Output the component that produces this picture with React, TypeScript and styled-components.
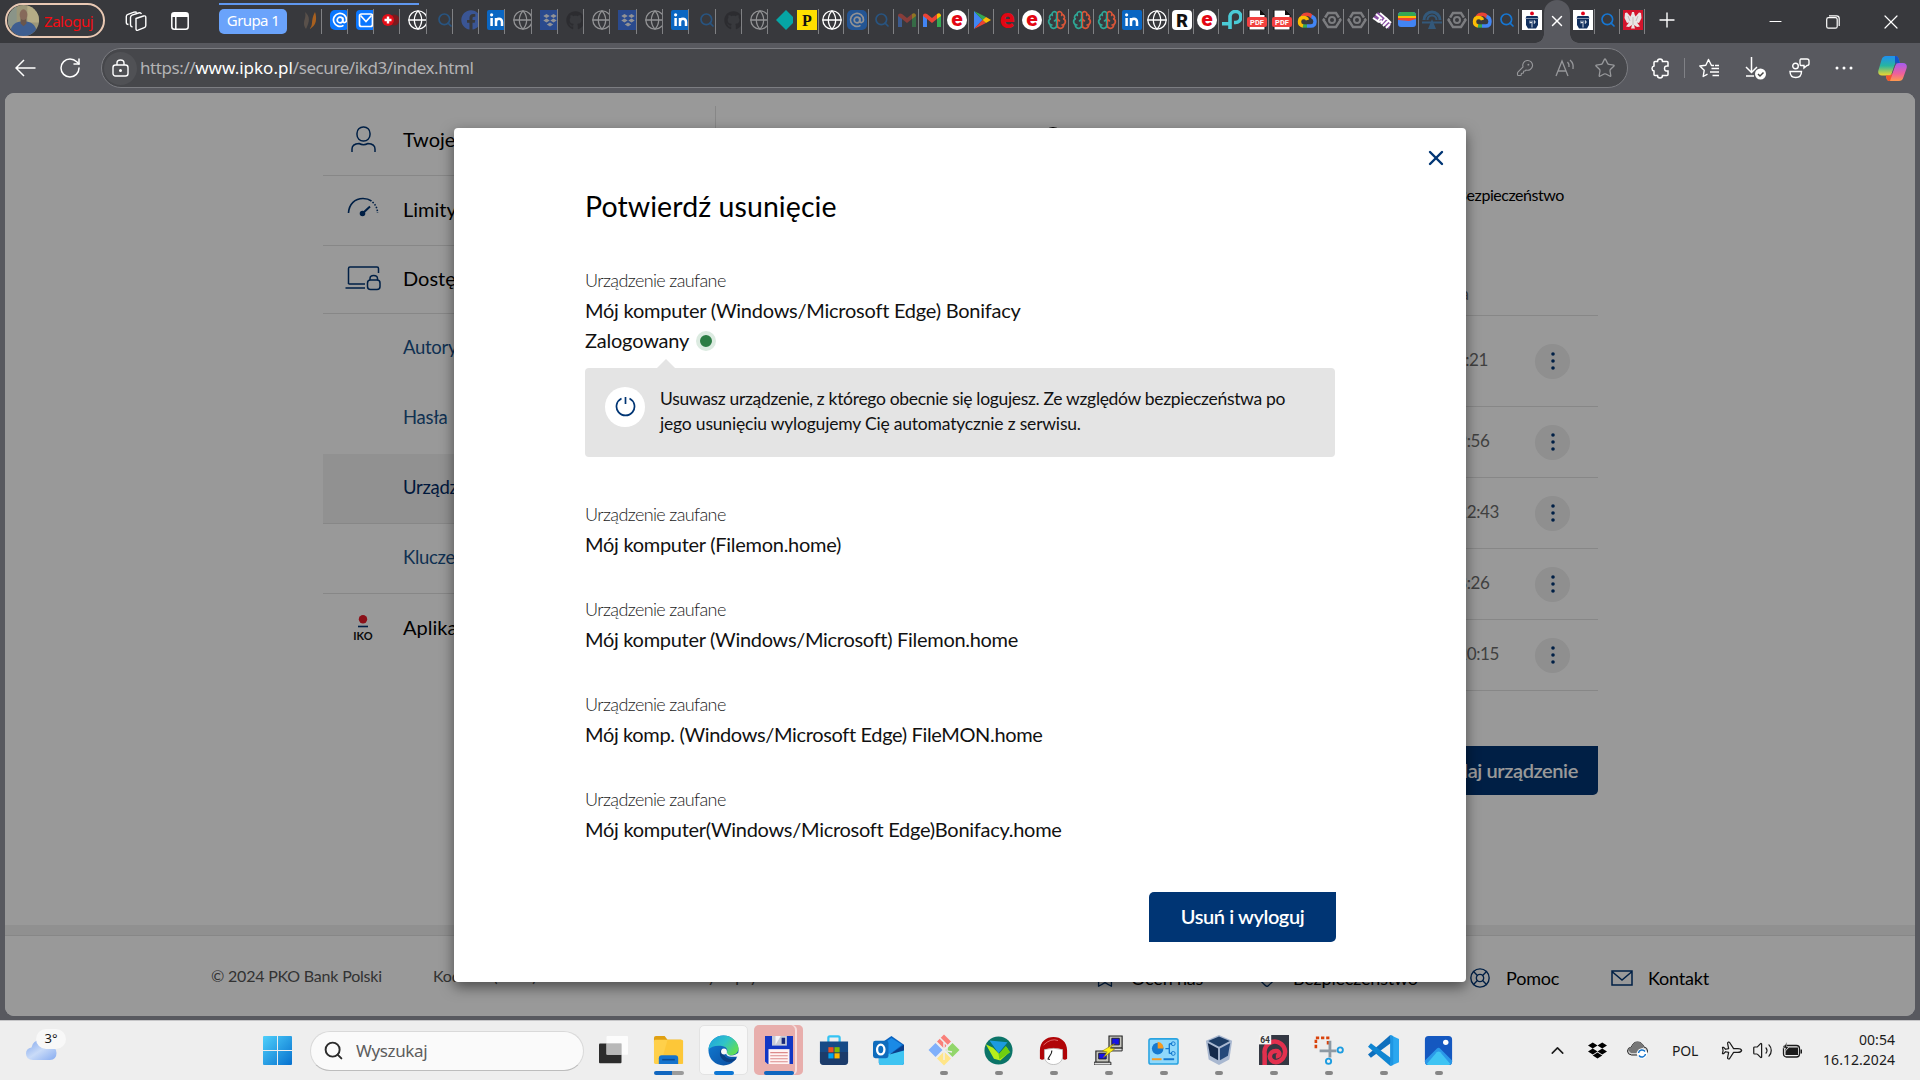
import React from 'react';
import styled, { createGlobalStyle, css } from 'styled-components';
import { Globe, Search, Star, KeyRound, Brain, X, Plus, Minus, ArrowLeft, RotateCw, Mail, Bookmark, Heart, LifeBuoy, Plane, Volume2, ChevronUp, CircleUser } from 'lucide-react';
import { FaDropbox, FaGithub, FaFacebook } from 'react-icons/fa';

const BANK = "Lato, 'Noto Sans', sans-serif";
const SYS = "'Noto Sans', 'Open Sans', sans-serif";
const NAVY = '#003574';

const Global = createGlobalStyle`
  *, *::before, *::after { box-sizing: border-box; }
  html, body { margin: 0; padding: 0; }
  body { overflow: hidden; background: #58595f; }
  svg { display: block; flex: none; }
`;

const Screen = styled.div`
  width: 1920px;
  height: 1080px;
  display: flex;
  flex-direction: column;
  background: #58595f;
  font-family: ${SYS};
  overflow: hidden;
`;

/* ---------- tab strip ---------- */
const TabStrip = styled.header`
  position: relative;
  display: flex;
  align-items: flex-start;
  height: 43px;
  background: #38393d;
  color: #fff;
`;
const Profile = styled.div`
  display: flex;
  align-items: center;
  gap: 5px;
  width: 100px;
  height: 35px;
  margin: 3px 0 0 5px;
  padding-left: 1px;
  border: 2px solid #e9c9b4;
  border-radius: 18px;
  color: #f40b12;
  font-size: 15px;
  letter-spacing: -0.45px;
`;
const StripCell = styled.div<{ $w: number; $h?: number }>`
  flex: none;
  display: flex;
  align-items: center;
  justify-content: center;
  width: ${p => p.$w}px;
  height: ${p => p.$h ?? 41}px;
`;
const GroupChip = styled.div`
  flex: none;
  width: 68px;
  height: 25px;
  margin: 9px 8.3px 0 25px;
  border-radius: 5px;
  background: #6aa3fb;
  font-size: 15px;
  line-height: 23px;
  text-align: center;
  letter-spacing: -0.6px;
`;
const GroupLine = styled.div`
  position: absolute;
  left: 219px;
  top: 3px;
  width: 200px;
  height: 2px;
  background: #5f97ef;
`;
const Tab = styled.div<{ $grouped?: boolean; $dim?: boolean; $last?: boolean }>`
  flex: none;
  display: flex;
  align-items: center;
  width: ${p => (p.$grouped ? 26.28 : 25)}px;
  height: 25px;
  margin-top: 9px;
  padding: 0 0 3px ${p => (p.$grouped ? 8 : 3)}px;
  overflow: hidden;
  border-right: 1px solid ${p => (p.$last ? 'transparent' : '#808184')};
  & > svg { opacity: ${p => (p.$dim ? 0.45 : 1)}; }
`;
const ActiveTab = styled.div`
  position: relative;
  flex: none;
  display: flex;
  align-items: center;
  justify-content: center;
  width: 26px;
  height: 43px;
  padding-bottom: 2px;
  border-radius: 13px 13px 0 0;
  background: #58595f;
  &::before, &::after {
    content: '';
    position: absolute;
    bottom: 0;
    width: 9px;
    height: 9px;
  }
  &::before { left: -9px; background: radial-gradient(circle at 0 0, transparent 8.5px, #58595f 9px); }
  &::after { right: -9px; background: radial-gradient(circle at 100% 0, transparent 8.5px, #58595f 9px); }
`;
const Spacer = styled.div`flex: 1;`;

/* ---------- toolbar ---------- */
const Toolbar = styled.nav`
  display: flex;
  align-items: center;
  height: 50px;
  padding-left: 5px;
  background: #58595f;
  color: #fff;
`;
const Address = styled.div`
  display: flex;
  align-items: center;
  width: 1527px;
  height: 40px;
  margin: 0 9px 0 7px;
  border: 1px solid #7c7d82;
  border-radius: 20px;
  background: #46474b;
`;
const LockBadge = styled.div`
  display: grid;
  place-items: center;
  width: 33px;
  height: 33px;
  margin: 0 3px 0 2px;
  border-radius: 50%;
  background: #505155;
`;
const Url = styled.div`
  flex: 1;
  padding-bottom: 2px;
  color: #b3b3b5;
  font-size: 17px;
  letter-spacing: -0.42px;
  b { font-weight: 400; color: #fff; letter-spacing: 0; }
`;
const ToolCell = styled.div<{ $w: number; $muted?: boolean }>`
  flex: none;
  display: flex;
  align-items: center;
  justify-content: center;
  width: ${p => p.$w}px;
  height: 40px;
  color: ${p => (p.$muted ? '#97989b' : '#fff')};
`;
const ToolDivider = styled.div`width: 1px; height: 20px; margin: 0 0 0 1px; background: #808186;`;

/* ---------- page ---------- */
const Page = styled.main`
  position: relative;
  flex: none;
  display: flex;
  flex-direction: column;
  width: 1910px;
  height: 923px;
  margin: 0 5px;
  border-radius: 9px;
  overflow: hidden;
  background: #fff;
  font-family: ${BANK};
`;
const PageBody = styled.div`
  display: flex;
  height: 832px;
  padding: 13px 317px 0 318px;
`;
const Sidebar = styled.aside`
  width: 393px;
  border-right: 1px solid #e2e2e2;
`;
const SideItem = styled.div<{ $h?: number; $line?: boolean }>`
  display: flex;
  align-items: center;
  height: ${p => p.$h ?? 70}px;
  padding-bottom: 3px;
  border-bottom: 1px solid ${p => (p.$line === false ? 'transparent' : '#e2e2e2')};
  font-size: 20px;
  color: #000;
  white-space: nowrap;
`;
const SideIcon = styled.div`
  width: 80px;
  display: flex;
  justify-content: center;
  color: ${NAVY};
`;
const SubItem = styled.div<{ $active?: boolean; $line?: boolean }>`
  display: flex;
  align-items: center;
  height: 70px;
  padding: 0 0 4px 80px;
  font-size: 18.5px;
  letter-spacing: -0.3px;
  color: ${p => (p.$active ? '#002a66' : '#1a5289')};
  background: ${p => (p.$active ? '#f2f2f2' : 'transparent')};
  border-bottom: 1px solid ${p => (p.$line ? '#e2e2e2' : 'transparent')};
`;
const MainColumn = styled.section`
  flex: 1;
  display: flex;
  flex-direction: column;
`;
const Views = styled.div`
  display: flex;
  justify-content: space-between;
  align-items: flex-start;
  height: 148px;
  padding: 20px 34px 0 326px;
  font-size: 16px;
  letter-spacing: -0.45px;
  span { margin-top: 59px; }
`;
const TableHead = styled.div`
  display: flex;
  justify-content: flex-end;
  align-items: center;
  height: 62px;
  padding: 18px 129px 0 0;
  border-bottom: 1px solid #e2e2e2;
  font-size: 17px;
  color: #707070;
`;
const DeviceRow = styled.div<{ $h: number }>`
  display: flex;
  justify-content: flex-end;
  align-items: center;
  height: ${p => p.$h}px;
  border-bottom: 1px solid #e2e2e2;
`;
const Stamp = styled.div<{ $gap: number }>`
  margin: 0 ${p => p.$gap}px 3px 0;
  font-size: 17px;
  letter-spacing: -0.4px;
  color: #6c6c6c;
`;
const MoreButton = styled.button`
  width: 35px;
  height: 35px;
  margin: 0 28px 0 0;
  padding: 0;
  display: grid;
  place-items: center;
  border: 0;
  border-radius: 50%;
  background: #eeeeee;
`;
const Action = styled.button<{ $w: number; $h: number }>`
  align-self: flex-end;
  width: ${p => p.$w}px;
  height: ${p => p.$h}px;
  padding: 0 0 2px;
  border: 0;
  border-radius: 5px 0 5px 0;
  background: ${NAVY};
  color: #fff;
  font: 600 20px ${BANK};
  letter-spacing: -0.4px;
`;
const DialogActions = styled.div`
  display: flex;
  justify-content: flex-end;
  margin-top: auto;
  padding-bottom: 40px;
`;
const AddWrap = styled.div`
  display: flex;
  justify-content: flex-end;
  padding-top: 55px;
`;
const Band = styled.div`
  height: 11px;
  background: #f1f1f1;
  border-bottom: 1px solid #e2e2e2;
`;
const Footer = styled.footer`
  flex: 1;
  display: flex;
  align-items: center;
  padding: 0 0 0 206px;
  font-size: 16px;
  letter-spacing: -0.2px;
  color: #555;
`;
const FootNote = styled.div<{ $w: number }>`
  width: ${p => p.$w}px;
  padding-bottom: 2px;
`;
const FootLink = styled.div<{ $w: number }>`
  display: flex;
  align-items: center;
  gap: 15px;
  width: ${p => p.$w}px;
  padding-top: 4px;
  font-size: 18px;
  color: #000;
  svg { color: ${NAVY}; }
`;

/* ---------- dialog ---------- */
const Overlay = styled.div`
  position: absolute;
  inset: 0;
  display: flex;
  align-items: center;
  justify-content: center;
  background: rgba(0, 0, 0, 0.4);
`;
const Dialog = styled.div`
  position: relative;
  display: flex;
  flex-direction: column;
  width: 1012px;
  height: 854px;
  padding: 60px 130px 0 131px;
  border-radius: 4px;
  background: #fff;
  box-shadow: 0 5px 14px rgba(0, 0, 0, 0.5);
  color: #111;
`;
const Close = styled.button`
  position: absolute;
  right: 18px;
  top: 18px;
  padding: 0;
  border: 0;
  background: none;
  color: ${NAVY};
`;
const Title = styled.h1`
  margin: 0 0 41px;
  font-size: 28.5px;
  line-height: 36px;
  font-weight: 400;
  letter-spacing: 0.08px;
  color: #000;
`;
const Device = styled.div`
  & + & { margin-top: 34px; }
`;
const Label = styled.div`
  height: 31px;
  font-size: 18px;
  font-weight: 300;
  line-height: 30px;
  letter-spacing: -0.62px;
  color: #222;
`;
const Name = styled.div<{ $ls?: number }>`
  display: flex;
  align-items: center;
  gap: 7px;
  height: 30px;
  font-size: 20px;
  line-height: 28px;
  white-space: nowrap;
  letter-spacing: ${p => p.$ls ?? -0.28}px;
  span { line-height: 28px; padding-bottom: 2px; }
`;
const Dot = styled.i`
  width: 20px;
  height: 20px;
  border: 4px solid #dcebe1;
  border-radius: 50%;
  background: #2c7d45;
`;
const Warning = styled.div`
  position: relative;
  display: flex;
  align-items: flex-start;
  gap: 15px;
  width: 750px;
  height: 89px;
  margin: 12px 0 42px;
  padding: 18px 20px 0;
  border-radius: 4px;
  background: #e4e4e4;
  font-size: 17.5px;
  line-height: 25px;
  &::before {
    content: '';
    position: absolute;
    left: 72px;
    top: -9px;
    border: 9px solid transparent;
    border-top: 0;
    border-bottom-color: #e4e4e4;
  }
`;
const PowerBadge = styled.div`
  flex: none;
  display: grid;
  place-items: center;
  width: 40px;
  height: 40px;
  margin-top: 1px;
  border-radius: 50%;
  background: #fff;
`;
const WarnLine = styled.div<{ $ls: number }>`
  white-space: nowrap;
  letter-spacing: ${p => p.$ls}px;
`;

/* ---------- taskbar ---------- */
const Taskbar = styled.div`
  flex: none;
  display: flex;
  align-items: center;
  height: 60px;
  margin-top: 4px;
  border-top: 1px solid #c6c6c8;
  background: #eeeeee;
  color: #1b1b1b;
`;
const Weather = styled.div`
  position: relative;
  width: 250px;
  height: 60px;
  padding: 19px 0 0 26px;
`;
const Temp = styled.div`
  position: absolute;
  left: 36px;
  top: 8px;
  width: 30px;
  height: 20px;
  border-radius: 10px;
  background: #f8f8f8;
  font-size: 13px;
  line-height: 19px;
  text-align: center;
`;
const SearchBox = styled.div`
  flex: none;
  display: flex;
  align-items: center;
  gap: 12px;
  width: 274px;
  height: 40px;
  margin: 0 2px 0 5px;
  padding-left: 12px;
  border: 1px solid #d9d9d9;
  border-bottom-color: #bdbdbd;
  border-radius: 20px;
  background: #fafafa;
  font-size: 17px;
  letter-spacing: -0.35px;
  color: #5d5d5d;
`;
const AppCell = styled.div`
  position: relative;
  flex: none;
  display: flex;
  align-items: center;
  justify-content: center;
  width: 55px;
  height: 60px;
  padding-bottom: 1px;
`;
const Tile = styled.div<{ $tone: 'none' | 'light' | 'red' }>`
  display: grid;
  place-items: center;
  width: 49px;
  height: 50px;
  border-radius: 5px;
  ${p => p.$tone === 'light' && css`background: #f8f8f8; border: 1px solid #e3e3e3;`}
  ${p => p.$tone === 'red' && css`background: #e8aeac; box-shadow: inset -6px 0 0 #e8aeac, inset -8px 0 0 #f6dedd;`}
`;
const Mark = styled.div<{ $w: number; $c: string }>`
  position: absolute;
  left: 50%;
  bottom: 6px;
  width: ${p => p.$w}px;
  height: 4px;
  transform: translateX(-50%);
  border-radius: 2px;
  background: ${p => p.$c};
`;
const TrayCell = styled.div<{ $w: number }>`
  flex: none;
  display: flex;
  align-items: center;
  justify-content: center;
  width: ${p => p.$w}px;
  padding-bottom: 1px;
  font-size: 14px;
  letter-spacing: -0.2px;
`;
const Clock = styled.div`
  width: 84px;
  margin: 0 24px 0 4px;
  padding: 0 1px 2px 0;
  text-align: right;
  font-size: 14px;
  line-height: 20px;
  letter-spacing: 0.04px;
`;

/* ---------- favicons ---------- */
const Svg = ({ s = 20, children, vb = '0 0 20 20', w }: { s?: number; w?: number; vb?: string; children: React.ReactNode }) => (
  <svg width={w ?? s} height={s} viewBox={vb} fill="none">{children}</svg>
);
const At = () => <Svg><rect width="20" height="20" rx="5" fill="#0a77ff" /><circle cx="10" cy="10" r="2.8" stroke="#fff" strokeWidth="1.7" /><path d="M12.8 7.400v3.600c0 2.400 3.700 2 3.700-1a6.500 6.500 0 1 0-3 5.400" stroke="#fff" strokeWidth="1.700" /></Svg>;
const MailBox = () => <Svg><rect width="20" height="20" rx="4" fill="#0a77ff" /><rect x="3.500" y="4" width="13" height="12.500" rx="2" stroke="#fff" strokeWidth="1.700" /><path d="m4.500 5.500 5.500 6 5.500-6" stroke="#fff" strokeWidth="1.700" /></Svg>;
const Flame = () => <Svg><path d="M3 19C-2 12 4 9 2 2c5 4 5 9 1 17Z" fill="#59504a" /><path d="M6 19c5-3 1-8 6-17 2 6 2 14-6 17Z" fill="#a8601f" /></Svg>;
const RedCross = () => <Svg><circle cx="12" cy="10" r="5.500" fill="#7b1a1e" /><circle cx="6" cy="10" r="6" fill="#e30d17" /><path d="M6 6.500v7M2.500 10h7" stroke="#fff" strokeWidth="2.400" /></Svg>;
const World = () => <Globe size={22} strokeWidth={1.4} color="#fff" style={{ marginLeft: -1 }} />;
const Find = () => <Search size={16} strokeWidth={2.500} color="#1676d2" style={{ marginLeft: 2 }} />;
const Fb = () => <FaFacebook size={20} color="#3d78ff" />;
const Ln = () => <Svg><rect width="20" height="20" rx="2" fill="#0a66c2" /><path d="M4.600 8v8M9 16V8m0 4c0-4.200 6-4.500 6 0v4" stroke="#fff" strokeWidth="2.500" /><circle cx="4.600" cy="4.800" r="1.600" fill="#fff" /></Svg>;
const Dbx = () => <Svg><rect width="20" height="20" fill="#1a60f0" /><path d="m6.500 4 3.200 2-3.200 2-3.200-2zm7 0 3.200 2-3.200 2-3.200-2zm-7 4.500 3.200 2-3.200 2-3.200-2zm7 0 3.200 2-3.200 2-3.200-2zM10 12.500l3.200 2-3.200 2-3.200-2z" fill="#fff" /></Svg>;
const Git = () => <FaGithub size={19} color="#1e1e22" />;
const Diamond = () => <Svg><path d="M10 0l10 10-10 10L0 10z" fill="#06a5a5" /></Svg>;
const Letter = ({ bg, fg, ch, r = 0, font = 'Roboto', size = 17, y = 16 }: { bg: string; fg: string; ch: string; r?: number; font?: string; size?: number; y?: number }) => (
  <Svg><rect width="20" height="20" rx={r} fill={bg} /><text x="10" y={y} textAnchor="middle" fontFamily={font} fontWeight="900" fontSize={size} fill={fg}>{ch}</text></Svg>
);
const PBadge = () => <Letter bg="#ffdf00" fg="#111" ch="P" font="Liberation Serif" size={16} y={15.5} />;
const EWhite = () => <Letter bg="#fff" fg="#e30613" ch="e" r={10} size={21} />;
const ERed = () => <Letter bg="transparent" fg="#e30613" ch="e" size={27} y={17.5} />;
const RBadge = () => <Letter bg="#fff" fg="#111" ch="R" r={4} size={18} y={16.5} />;
const Gmail = () => <Svg><path d="M1 17V5l4 3v9z" fill="#4285f4" /><path d="M15 17V8l4-3v12z" fill="#34a853" /><path d="M1 6c0-3 2.500-3 4-2l5 4 5-4-.1 5L10 13 5 9 1 6z" fill="#ea4335" /><path d="M15 9V4c2-1.500 4-.5 4 2z" fill="#fbbc04" /></Svg>;
const Play = () => <Svg><path d="M2 1v18l8.500-9z" fill="#4285f4" /><path d="M2 1l12 6-3.500 3z" fill="#34a853" /><path d="M2 19l12-6-3.500-3z" fill="#ea4335" /><path d="M14 7l5 3-5 3-3.500-3z" fill="#fbbc04" /></Svg>;
const Mind = () => (
  <svg width="20" height="20" viewBox="0 0 20 20" fill="none">
    <defs><linearGradient id="mind" gradientUnits="userSpaceOnUse" x1="0" x2="24" y1="0" y2="0"><stop offset=".5" stopColor="#2ea795" /><stop offset=".5" stopColor="#d95537" /></linearGradient></defs>
    <Brain size={20} strokeWidth={2} stroke="url(#mind)" />
    <path d="M9.300 2v16" stroke="#2ea795" /><path d="M10.700 2v16" stroke="#d95537" />
  </svg>
);
const Tp = () => <Svg><path d="M8 19V6a5.500 5.500 0 1 1 5.500 6.500H12" stroke="#4acbd6" strokeWidth="3.600" /><path d="M0 12h7v3.500H0z" fill="#4acbd6" /></Svg>;
const Pdf = () => <Svg><path d="M2 0h11l5 5v15H2z" fill="#fff" stroke="#111" /><path d="M13 0l5 5h-5z" fill="#111" /><rect y="7" width="20" height="10" rx="2" fill="#f2413f" /><text x="10" y="14.800" fontSize="7.500" fontWeight="700" fill="#fff" fontFamily="Roboto" textAnchor="middle">PDF</text></Svg>;
const Cloud = () => <Svg><path d="M5 7a6 6 0 0 1 10 0" stroke="#ea4335" strokeWidth="3.400" /><path d="M14.500 6.500c5 1.500 4.500 9.500-.5 9.500h-4" stroke="#4285f4" strokeWidth="3.400" /><path d="M10 16H5.500" stroke="#34a853" strokeWidth="3.400" /><path d="M6 16c-5-1-4.500-8.500.5-8.500 2 0 3.500 1 4 2.500" stroke="#fbbc04" strokeWidth="3.400" /></Svg>;
const Hexa = () => <Svg><path d="M6 3h8l4.500 7-4.500 7H6l-4.500-7z" stroke="#d0d0d2" strokeWidth="2.400" /><path d="M1 7l5 3M19 7l-5 3" stroke="#38393d" strokeWidth="1.200" /><circle cx="10" cy="10" r="3" stroke="#d0d0d2" strokeWidth="2" /></Svg>;
const Stripes = () => <Svg><path d="M1 8l5-6 13 11-2 6z" fill="#8a4fa5" /><path d="M1 8l6 4 3-1M4 4l6 5M8 3l6 5-5 6M14 8l5 5M11 16l5-5M14 18l4-4M5 12l4-5" stroke="#fff" strokeWidth="1.900" /></Svg>;
const Wallet = () => <Svg><rect x="1" y="2" width="18" height="15" rx="3" fill="#4285f4" /><path d="M1 10V6h18v3l-7 2z" fill="#ea4335" /><path d="M1 6h18v2H1z" fill="#fbbc04" /><path d="M1 6c0-5 3-4 9-4s9-1 9 4z" fill="#34a853" /></Svg>;
const Tunnel = () => <Svg><path d="M2 10a8 8 0 0 1 16 0" stroke="#2e7fc4" strokeWidth="3" /><path d="M5.500 10a4.500 4.500 0 0 1 9 0M0 12.500h20" stroke="#2e7fc4" strokeWidth="2" /><path d="M6 19l4-10 4 10z" fill="#2e7fc4" /></Svg>;
const Pko = () => <Svg><rect width="20" height="20" fill="#fff" /><circle cx="10" cy="3.400" r="1.900" fill="#e2001a" /><path d="M4.500 6h11l1 2.500h-13zM4 9h12v6l-2 3.500H6l-2-3.500z" fill="#12305f" /><path d="M8 10.500v3M10 10.500v7M8 12.500h2M12.300 10.500v3q2-1.500 0-3" stroke="#fff" strokeWidth=".8" /></Svg>;
const Eagle = () => <Svg><rect width="20" height="20" fill="#d4142c" /><path d="M9 2h2l.6 2.500 1 2L16 2.500l2 .5.500 5-2.500 5-2-.5 3 4-3 .500L11 15l1 3.500H8L9 15l-3 2-3-.500 3-4-2 .500-2.500-5L2 3l2-.5 3.400 4 1-2z" fill="#e9e4e4" /><path d="M5 6l2 5M15 6l-2 5M10 7v8" stroke="#b7a9a9" strokeWidth=".7" /></Svg>;

type Fav = [React.FC, boolean?];
const groupTabs: Fav[] = [[Flame], [At], [MailBox], [RedCross], [World], [Find, true], [Fb, true], [Ln], [World, true], [Dbx, true], [Git, true], [World, true], [Dbx, true], [World, true], [Ln], [Find, true], [Git, true], [World, true], [Diamond]];
const looseTabs: Fav[] = [[PBadge], [World], [At, true], [Find, true], [Gmail, true], [Gmail], [EWhite], [Play], [ERed], [EWhite], [Mind], [Mind], [Mind], [Ln], [World], [RBadge], [EWhite], [Tp], [Pdf], [Pdf], [Cloud], [Hexa, true], [Hexa, true], [Stripes], [Wallet], [Tunnel, true], [Hexa, true], [Cloud], [Find]];

/* ---------- taskbar icons ---------- */
const V = '0 0 32 32';
const TaskView = () => <Svg s={30} vb={V}><rect x="0" y="9" width="24" height="21" rx="1" fill="#2c2c2c" /><rect x="8" y="1" width="23" height="20" rx="1" fill="#fff" opacity=".82" /><path d="M8 9h16v12H8z" fill="#b8b8b8" /></Svg>;
const Explorer = () => <Svg s={31} vb={V}><path d="M1 6V3q0-2 2-2h9l3 4h14v4H1z" fill="#e0a012" /><rect x="1" y="5" width="30" height="25" rx="1.500" fill="#ffd04a" /><path d="M15 5h14q2 0 2 2v23H8z" fill="#fbc22d" opacity=".6" /><path d="M6 30v-6q0-3 3-3h14q3 0 3 3v6z" fill="#1573cc" /><path d="M9.500 25.500h13" stroke="#0b4c93" strokeWidth="1.600" /></Svg>;
const Edge = () => (
  <Svg s={31} vb={V}>
    <defs>
      <linearGradient id="eg" x1="0" y1="0" x2="1" y2=".6"><stop stopColor="#1d9de0" /><stop offset=".55" stopColor="#2fc3c9" /><stop offset="1" stopColor="#5fdd58" /></linearGradient>
      <linearGradient id="eb" x1="0" y1="0" x2="1" y2="1"><stop stopColor="#1180d8" /><stop offset="1" stopColor="#0b4a9c" /></linearGradient>
    </defs>
    <circle cx="16" cy="16" r="15.500" fill="url(#eb)" />
    <path d="M.5 15C1 6 8 .5 16 .5S31.500 7 31.500 13.500c0 5-4 7.500-8 7.500-4 0-5-1.500-4-3.500 1-1.500.5-5-4-6C9 10 3 12 .5 15Z" fill="url(#eg)" />
    <path d="M14 14c-4 5-1 14 8 14 3 0 6-1.500 7.500-4-4 1.500-13 1.500-14-7z" fill="#0a3f83" />
    <path d="M19 17.500c-1 3 1 5 5 5h7.500c1-1 .8-3.500.5-4.500l-4 2.500c-4 1.500-8 0-8-1.500z" fill="#f8f8f8" />
    <circle cx="16.500" cy="17" r="3" fill="#f8f8f8" />
  </Svg>
);
const Floppy = () => <Svg s={28} vb={V}><path d="M0 0h32v32H3l-3-3z" fill="#1237c4" /><path d="M8 0h17v11H8z" fill="#c9ccd6" /><path d="M12 0l6 0-6 10z" fill="#f4f4f8" /><path d="M19 2h4v7h-4z" fill="#1a2a7a" /><path d="M4 15h24v17H4z" fill="#fff3f2" /><path d="M6 19h20M6 22.500h20M6 26h20M6 29.500h20" stroke="#dc8a8a" strokeWidth="1.200" /></Svg>;
const Store = () => <Svg s={30} vb={V}><path d="M10 8V3q0-1.500 1.500-1.500h9q1.500 0 1.500 1.500v5" stroke="#35c3f3" strokeWidth="2.400" /><path d="M1 7h30v21q0 4-4 4H5q-4 0-4-4z" fill="#164a86" /><path d="M1 18h30v10q0 4-4 4H5q-4 0-4-4z" fill="#1f3660" opacity=".7" /><path d="M10 13h5.500v5.500H10z" fill="#f25022" /><path d="M16.500 13H22v5.500h-5.500z" fill="#7fba00" /><path d="M10 19.500h5.500V25H10z" fill="#00a4ef" /><path d="M16.500 19.500H22V25h-5.500z" fill="#ffb900" /></Svg>;
const Outlook = () => <Svg s={31} vb={V}><path d="M6 10 19 1l13 9v18q0 3-3 3H9q-3 0-3-3z" fill="#0a63c0" /><path d="M10 9l9-6 11 7-14 11z" fill="#1a8ae6" /><path d="M6 21l12-2 14-7v16q0 3-3 3H9q-3 0-3-3z" fill="#3fc4f2" /><path d="M17 20 32 10v6z" fill="#0b3f8c" /><rect y="6" width="16" height="18" rx="2.500" fill="#0f6cbd" /><ellipse cx="8" cy="15" rx="3.800" ry="5" stroke="#fff" strokeWidth="2.400" /></Svg>;
const GitTool = () => <Svg s={32} vb={V}><path d="M16 .5l7 7-7 7-7-7z" fill="#f98079" /><path d="M24.500 9l7 7-7 7-7-7z" fill="#92d66a" /><path d="M7.500 9l7 7-7 7-7-7z" fill="#80b0fb" /><path d="M16 17.500l7 7-7 7-7-7z" fill="#ffe588" /><path d="M12 4l7 7v6l5 1M16 8v18" stroke="#eee" strokeWidth="1.500" /></Svg>;
const GreenArrow = () => <Svg s={29} vb={V}><circle cx="16" cy="16" r="15.500" fill="#0b7468" /><path d="M6 5l20 2-10 12z" fill="#1c9be0" /><path d="M2 9l8 4 7 7 8-8 3 6-10 9-7-2z" fill="#b6ee1c" /><path d="M16 20l8-9 5 7-12 8z" fill="#6fcf10" /></Svg>;
const Masked = () => <Svg s={29} vb={V}><path d="M1 16C1 6 8 1 16 1s15 5 15 15v9q-2.500 2.500-5 0V15H6v10q-2.500 2.500-5 0z" fill="#b00508" /><path d="M6 15q10-3 20 0v8c0 5-5 8.500-10 8.500S6 28 6 23z" fill="#fff" stroke="#999" strokeWidth=".6" /><path d="M14 16c1 4-4 7-4 9.500l2 .5" stroke="#222" strokeWidth="1.200" /><path d="M5 10q8-8 16-5" stroke="#e27070" /></Svg>;
const Putty = () => <Svg s={30} vb={V}><path d="M16 1h14v13H16zM2 17h14v12H2z" fill="#c4c4bd" stroke="#222" strokeWidth="1.200" /><path d="M19 3.500h8v7h-8zM5 19.500h8v6H5z" fill="#1613e6" stroke="#222" /><path d="M15 14h15v3H15zM0 29h18v3H0z" fill="#ddd" stroke="#222" /><path d="M22 9 9 17l5 1-4 6 12-9-5-1z" fill="#fff01a" stroke="#8a7d00" strokeWidth=".6" /></Svg>;
const Panel = () => <Svg s={31} vb={V}><rect x="1" y="4" width="30" height="26" rx="2" fill="#8fd8fb" stroke="#2aa3e0" strokeWidth="1.600" /><circle cx="10" cy="14" r="6" fill="#1579cf" /><path d="M10 7v7h6q0-6-6-7z" fill="#f79a1f" /><path d="M4 25h10" stroke="#f79a1f" strokeWidth="2" /><path d="M16 25h11" stroke="#1579cf" strokeWidth="2" /><path d="M18 14h4m0-5v10m0-10h3m-3 10h3" stroke="#1579cf" strokeWidth="1.400" /><circle cx="26" cy="9" r="2" stroke="#1579cf" /><circle cx="26" cy="19" r="2" stroke="#1579cf" /></Svg>;
const Cube = () => <Svg s={30} vb={V}><path d="M16 0l14 6-3 20-11 6L5 26 2 6z" fill="#a9b8d0" /><path d="M16 1.500l11.500 5L16 12.500l-11.500-6z" fill="#1d3d66" /><path d="M4 8.500 15 14.500V27l-8.500-5z" fill="#14294a" /><path d="M28 8.500 17 14.500V27l8.500-5z" fill="#24487a" /></Svg>;
const Swirl = () => <Svg s={30} vb={V}><rect width="32" height="32" fill="#343843" /><path d="M6 32V20a11 11 0 1 1 12 9c-9-1-8-12 0-12 5 0 5 6 0 6" stroke="#e3304e" strokeWidth="4.800" /><rect width="13" height="10" fill="#f2f2f2" /><text x="6.500" y="8.500" fontSize="9" fontWeight="700" fill="#333" textAnchor="middle" fontFamily="Roboto">64</text></Svg>;
const Snip = () => <Svg s={30} vb={V}><path d="M2 14V3h13v8" stroke="#d9420b" strokeWidth="2.800" strokeDasharray="3.500 2" /><path d="M17 6v18M6 17h18" stroke="#8d99a3" strokeWidth="3" /><circle cx="28" cy="16" r="2.800" stroke="#1c9ce0" strokeWidth="2" /><circle cx="15.500" cy="28" r="2.800" stroke="#1c9ce0" strokeWidth="2" /></Svg>;
const Code = () => <Svg s={31} vb={V}><path d="M23 0l9 4v24l-9 4V0z" fill="#2ba7ef" /><path d="M23 0 0 20l3 3.500L24 8z" fill="#0f6fbd" /><path d="M23 32 0 12l3-3.500L24 24z" fill="#0f85d2" /><path d="M23 0l3 1v30l-3 1z" fill="#1f96e2" /></Svg>;
const Photos = () => <Svg s={29} vb={V}><rect x="1" width="30" height="32" rx="4" fill="#1558c0" /><path d="M1 27 14 14q2-2 4 0l13 13v1q0 4-4 4H5q-4 0-4-4z" fill="#2b98e8" /><path d="M3 31l11-13q2-2 4 0l11 13-2 1H5z" fill="#47d3f7" opacity=".75" /><circle cx="24" cy="7" r="3" fill="#fff" /></Svg>;

type AppEntry = { icon: React.FC; tone?: 'light' | 'red'; mark?: [number, string] };
const GREY: [number, string] = [8, '#868686'];
const apps: AppEntry[] = [
  { icon: TaskView },
  { icon: Explorer, mark: [30, 'linear-gradient(90deg, #1066bf 60%, #9b9b9b 60%)'] },
  { icon: Edge, tone: 'light', mark: [20, '#0f77d4'] },
  { icon: Floppy, tone: 'red', mark: [30, '#1066bf'] },
  { icon: Store }, { icon: Outlook },
  { icon: GitTool, mark: GREY }, { icon: GreenArrow, mark: GREY }, { icon: Masked, mark: GREY }, { icon: Putty, mark: GREY },
  { icon: Panel, mark: GREY }, { icon: Cube, mark: GREY }, { icon: Swirl, mark: GREY }, { icon: Snip, mark: GREY },
  { icon: Code, mark: GREY }, { icon: Photos, mark: GREY },
];

const Avatar = () => (
  <svg width="31" height="31" viewBox="0 0 32 32">
    <defs><clipPath id="av"><circle cx="16" cy="16" r="16" /></clipPath></defs>
    <g clipPath="url(#av)">
      <rect width="32" height="32" fill="#9c9779" /><path d="M20 0h12v18H20z" fill="#b5ac86" /><path d="M0 0h9v22H0z" fill="#8a9488" />
      <path d="M2 32c0-10 4-14 11-15h6c7 1 11 5 11 15z" fill="#3f5e90" /><path d="M13 13h6v6l-3 3-3-3z" fill="#6a564c" /><ellipse cx="16" cy="10" rx="4" ry="5.500" fill="#86695a" />
    </g>
  </svg>
);
const Copilot = () => (
  <svg width="29" height="27" viewBox="0 0 29 27">
    <defs>
      <linearGradient id="c1" x1="0" y1="0" x2="0" y2="1"><stop stopColor="#1f8ff0" /><stop offset=".5" stopColor="#27b5a0" /><stop offset="1" stopColor="#f3d62e" /></linearGradient>
      <linearGradient id="c2" x1="0" y1="0" x2="0" y2="1"><stop stopColor="#a45cf0" /><stop offset=".6" stopColor="#f0609a" /><stop offset="1" stopColor="#ff9a4d" /></linearGradient>
    </defs>
    <path d="M8 1h9c3 0 3.500 2 4 4l1 3c-4 0-5 1-6 4l-2 6c-1 2-2 2.500-4 2.500H4c-3 0-4.500-2-3.500-5.500L3.500 5C4.300 2 6 1 8 1Z" fill="url(#c1)" />
    <path d="M17 1c3 0 3.500 2 4 4l1 3c-3 0-4 0-5 2z" fill="#1452c8" />
    <path d="M21 26h-9c-3 0-3.500-2-4-5l4-1c2 0 2.500-2 3-4l2-5c1-2 2-3 4-3h4c3 0 4.500 2 3.500 5.500L25.500 22c-.8 3-2.500 4-4.500 4Z" fill="url(#c2)" />
    <path d="M12 26c-3 0-3.500-2-4-5.500h3c2 0 3-1 4-3z" fill="#f2572b" />
    <path d="M13.500 19l3.500-10q.8-1.800 2-2-1 1-1.600 3L14.600 18z" fill="#58595f" />
  </svg>
);

const sub = ['Autoryzacja', 'Hasła', 'Urządzenia', 'Klucze'];
const stamps: [string, number, number][] = [
  ['16.12.2024, 0:21', 91, 47], ['15.12.2024, 9:56', 71, 45.5], ['12.12.2024, 22:43', 71, 36], ['10.12.2024, 8:26', 71, 45.5], ['09.12.2024, 20:15', 71, 36],
];
const trusted: [string, number][] = [
  ['Mój komputer (Filemon.home)', -0.28], ['Mój komputer (Windows/Microsoft) Filemon.home', -0.3],
  ['Mój komp. (Windows/Microsoft Edge) FileMON.home', -0.35], ['Mój komputer(Windows/Microsoft Edge)Bonifacy.home', -0.28],
];

export default function App() {
  return (
    <Screen>
      <Global />
      <TabStrip>
        <GroupLine />
        <Profile><Avatar />Zaloguj</Profile>
        <StripCell $w={61}>
          <svg width="22" height="20" viewBox="0 0 22 20" fill="none" stroke="#fff" strokeWidth="1.400"><path d="M11 7.500 18.500 5q2.300-.7 2.300 1.500v8q0 1.600-1.500 2.200l-6.300 2.500q-2 .6-2-1.500z" /><path d="M7.500 16q-2-.3-2-2V6.500q0-1.700 1.500-2.300L13.500 2q2.500-.8 2.800 1.200" /><path d="M3.500 13.500q-2.200-.2-2.200-2v-6Q1.300 4 3 3.400L9 1.200Q11 .5 11.800 1.700" /></svg>
        </StripCell>
        <StripCell $w={28}>
          <svg width="18" height="18" viewBox="0 0 18 18" fill="none" stroke="#fff" strokeWidth="1.500"><rect x=".8" y=".8" width="16.400" height="16.400" rx="2.500" /><path d="M1 3h16" strokeWidth="4" /><path d="M4.800 4v13" /></svg>
        </StripCell>
        <GroupChip>Grupa 1</GroupChip>
        {groupTabs.map(([I, dim], i) => <Tab key={i} $grouped $dim={dim} $last={i === groupTabs.length - 1}><I /></Tab>)}
        {looseTabs.map(([I, dim], i) => <Tab key={i} $dim={dim}><I /></Tab>)}
        <Tab $last><Pko /></Tab>
        <ActiveTab><X size={18} strokeWidth={1.9} /></ActiveTab>
        <Tab><Pko /></Tab><Tab><Find /></Tab><Tab><Eagle /></Tab>
        <StripCell $w={44} $h={39}><Plus size={24} strokeWidth={1.4} /></StripCell>
        <Spacer />
        <StripCell $w={57} $h={43}><Minus size={19} strokeWidth={1.3} /></StripCell>
        <StripCell $w={58} $h={43}>
          <svg width="14" height="14" viewBox="0 0 14 14" fill="none" stroke="#fff" strokeWidth="1.200"><rect x=".7" y="2.700" width="10.500" height="10.500" rx="1.800" /><path d="M3 .8h7.500q2.700 0 2.700 2.700V11" /></svg>
        </StripCell>
        <StripCell $w={58} $h={43}><X size={24} strokeWidth={1.2} /></StripCell>
      </TabStrip>

      <Toolbar>
        <ToolCell $w={40}>
          <svg width="21" height="18" viewBox="0 0 21 18" fill="none" stroke="#fff" strokeWidth="1.500"><path d="M9 1 1 9l8 8M1 9h19.500" /></svg>
        </ToolCell>
        <ToolCell $w={49}><RotateCw size={24} strokeWidth={1.5} /></ToolCell>
        <Address>
          <LockBadge>
            <svg width="17" height="18" viewBox="0 0 17 18" fill="none" stroke="#fff" strokeWidth="1.400"><rect x="1" y="6" width="15" height="11" rx="2.500" /><path d="M5 6V4q0-3 3.500-3T12 4v2" /><circle cx="8.500" cy="11.500" r=".8" fill="#fff" /></svg>
          </LockBadge>
          <Url>https://<b>www.ipko.pl</b>/secure/ikd3/index.html</Url>
          <ToolCell $w={40} $muted><KeyRound size={18} strokeWidth={1.5} /></ToolCell>
          <ToolCell $w={40} $muted>
            <svg width="20" height="18" viewBox="0 0 20 18" fill="none" stroke="currentColor" strokeWidth="1.300"><path d="M1 17 7 2l6 15M3 12h8M12.500 3q2 2 1.500 5M15 1q4 3.500 3 9" /></svg>
          </ToolCell>
          <ToolCell $w={40} $muted><Star size={22} strokeWidth={1.4} /></ToolCell>
          <ToolCell $w={2} />
        </Address>
        <ToolCell $w={46}>
          <svg width="18" height="21" viewBox="0 0 18 21" fill="none" stroke="#fff" strokeWidth="1.500"><path d="M6.500 3.500q0-2.500 2.500-2.500t2.500 2.500H16q1 0 1 1V8q-3.500-.5-3.500 2.500T17 13v3.500q0 1-1 1h-4.500Q11.500 20 9 20t-2.500-2.500H4q-1 0-1-1V13Q1 12.500 1 10.500T3 8V4.500q0-1 1-1z" /></svg>
        </ToolCell>
        <ToolDivider />
        <ToolCell $w={49}>
          <svg width="21" height="20" viewBox="0 0 21 20" fill="none" stroke="#fff" strokeWidth="1.400"><path d="M15 7.500h-2.500L9.500 1.500l-2.700 5.700-6 .8 4.400 4.300-1 6.200 4.300-2.300M12.500 10.500H20M11 14h9M13.500 17.500H20M16 7.500h4" strokeLinejoin="round" /></svg>
        </ToolCell>
        <ToolCell $w={44}>
          <svg width="22" height="24" viewBox="0 0 22 24" fill="none" stroke="#fff" strokeWidth="1.500"><path d="M6.500 1v15M1 11l5.500 5.500L12 11M1 20h8" /><circle cx="15.500" cy="18" r="5.500" fill="#fff" stroke="none" /><path d="m13 18 2 2 3.500-3.500" stroke="#444" /></svg>
        </ToolCell>
        <ToolCell $w={43}>
          <svg width="21" height="21" viewBox="0 0 21 21" fill="none" stroke="#fff" strokeWidth="1.400"><circle cx="6.500" cy="8" r="2.800" /><path d="M1 13.500h11.500q0 6-5.700 6T1 13.500Z" /><path d="M12 1h6q2 0 2 2v2.500q0 2-2 2l-3 2.500V7.500h-3q-1 0-1-2V3q0-2 1-2Z" /></svg>
        </ToolCell>
        <ToolCell $w={46}><svg width="18" height="4" viewBox="0 0 18 4" fill="#fff"><circle cx="2" cy="2" r="1.500" /><circle cx="9" cy="2" r="1.500" /><circle cx="16" cy="2" r="1.500" /></svg></ToolCell>
        <ToolCell $w={50}><Copilot /></ToolCell>
      </Toolbar>

      <Page>
        <PageBody>
          <Sidebar>
            <SideItem>
              <SideIcon><svg width="25" height="27" viewBox="0 0 25 27" fill="none" stroke="currentColor" strokeWidth="1.500"><rect x="6" y="1" width="13" height="14" rx="6.200" /><path d="M1 26v-3q0-5 7-5.500 4.500 2.500 9 0 7 .5 7 5.500v3" /></svg></SideIcon>
              Twoje dane
            </SideItem>
            <SideItem>
              <SideIcon><svg width="32" height="24" viewBox="0 0 32 24" fill="none" stroke="currentColor" strokeWidth="1.600"><path d="M1.500 16C2 7 8 1.500 16 1.500q5 0 8.500 2.500" /><path d="M25.500 5q5 4.500 5 11" strokeDasharray="1.500 1.500" /><path d="m15.500 16.500 7.500-7" strokeWidth="2" /><circle cx="15.500" cy="16.500" r="2" fill="currentColor" /></svg></SideIcon>
              Limity
            </SideItem>
            <SideItem $h={68}>
              <SideIcon><svg width="36" height="25" viewBox="0 0 36 25" fill="none" stroke="currentColor" strokeWidth="1.500"><path d="M3.500 18V2.500q0-1.500 1.500-1.500h27q1.500 0 1.500 1.500V7M3.500 18H20M.5 22H20" /><rect x="22.500" y="14" width="12.500" height="9.500" rx="3" /><path d="M25 14v-1.500q0-3 3.700-3t3.800 3V14" /></svg></SideIcon>
              Dostęp
            </SideItem>
            {sub.map((t, i) => <SubItem key={t} $active={i === 2} $line={i > 1}>{t}</SubItem>)}
            <SideItem $line={false}>
              <SideIcon><svg width="22" height="25" viewBox="0 0 22 25"><circle cx="11" cy="4.200" r="4.200" fill="#e81c2a" /><path d="M6 11.500h10" stroke={NAVY} strokeWidth="1.600" /><text x="11" y="25" fontFamily="Lato" fontSize="11" fontWeight="700" textAnchor="middle" fill="#111">IKO</text></svg></SideIcon>
              Aplikacja IKO
            </SideItem>
          </Sidebar>
          <MainColumn>
            <Views><CircleUser size={22} /><span>Bezpieczeństwo</span></Views>
            <TableHead>Data logowania</TableHead>
            {stamps.map(([t, h, g]) => (
              <DeviceRow key={t} $h={h}>
                <Stamp $gap={g}>{t}</Stamp>
                <MoreButton><svg width="4" height="18" viewBox="0 0 4 18" fill={NAVY}><circle cx="2" cy="2" r="1.800" /><circle cx="2" cy="9" r="1.800" /><circle cx="2" cy="16" r="1.800" /></svg></MoreButton>
              </DeviceRow>
            ))}
            <AddWrap><Action $w={187} $h={49}>Dodaj urządzenie</Action></AddWrap>
          </MainColumn>
        </PageBody>
        <Band />
        <Footer>
          <FootNote $w={222}>© 2024 PKO Bank Polski</FootNote>
          <FootNote $w={244}>Kod BIC (Swift): BPKOPLPW</FootNote>
          <FootNote $w={417}>Polityka prywatności</FootNote>
          <FootLink $w={162}><Bookmark size={22} strokeWidth={1.5} />Oceń nas</FootLink>
          <FootLink $w={213}><Heart size={22} strokeWidth={1.5} />Bezpieczeństwo</FootLink>
          <FootLink $w={142}><LifeBuoy size={22} strokeWidth={1.5} />Pomoc</FootLink>
          <FootLink $w={120}>
            <svg width="22" height="16" viewBox="0 0 22 16" fill="none" stroke="currentColor" strokeWidth="1.500"><path d="M1 1h20v14H1zM1.500 2 11 10l9.500-8" /></svg>
            Kontakt
          </FootLink>
        </Footer>

        <Overlay>
          <Dialog>
            <Close aria-label="Zamknij"><X size={24} strokeWidth={2.4} /></Close>
            <Title>Potwierdź usunięcie</Title>
            <div>
              <Label>Urządzenie zaufane</Label>
              <Name $ls={-0.24}><span>Mój komputer (Windows/Microsoft Edge) Bonifacy</span></Name>
              <Name $ls={-0.2}><span>Zalogowany</span><Dot /></Name>
              <Warning>
                <PowerBadge><svg width="21" height="21" viewBox="0 0 21 21" fill="none" stroke={NAVY} strokeWidth="1.700"><path d="M10.500 1v7M6.500 2.400a9 9 0 1 0 8 0" /></svg></PowerBadge>
                <div>
                  <WarnLine $ls={-0.32}>Usuwasz urządzenie, z którego obecnie się logujesz. Ze względów bezpieczeństwa po</WarnLine>
                  <WarnLine $ls={-0.19}>jego usunięciu wylogujemy Cię automatycznie z serwisu.</WarnLine>
                </div>
              </Warning>
            </div>
            {trusted.map(([n, ls]) => <Device key={n}><Label>Urządzenie zaufane</Label><Name $ls={ls}><span>{n}</span></Name></Device>)}
            <DialogActions><Action $w={187} $h={50}>Usuń i wyloguj</Action></DialogActions>
          </Dialog>
        </Overlay>
      </Page>

      <Taskbar>
        <Weather>
          <svg width="31" height="20" viewBox="0 0 31 20"><defs><linearGradient id="wc" x1="0" y1="0" x2="1" y2="1"><stop stopColor="#7ea4ec" /><stop offset=".5" stopColor="#c9dbf8" /><stop offset="1" stopColor="#86abf0" /></linearGradient></defs><path d="M7 20q-7-.5-7-6.500 0-5 5.500-6Q7 0 14.500 0 21 0 23 6q7.500.5 7.500 7T24 20z" fill="url(#wc)" /></svg>
          <Temp>3°</Temp>
        </Weather>
        <AppCell>
          <svg width="29" height="29" viewBox="0 0 29 29"><defs><linearGradient id="win" x1="0" y1="0" x2="1" y2="1"><stop stopColor="#4fd0fb" /><stop offset="1" stopColor="#0670ce" /></linearGradient></defs><path d="M0 1q0-1 1-1h13v14H0zM15 0h13q1 0 1 1v13H15zM0 15h14v14H1q-1 0-1-1zM15 15h14v13q0 1-1 1H15z" fill="url(#win)" /></svg>
        </AppCell>
        <SearchBox><Search size={21} strokeWidth={2.200} color="#2b2b2b" />Wyszukaj</SearchBox>
        {apps.map(({ icon: I, tone, mark }, i) => (
          <AppCell key={i}>
            <Tile $tone={tone ?? 'none'}><I /></Tile>
            {mark && <Mark $w={mark[0]} $c={mark[1]} />}
          </AppCell>
        ))}
        <Spacer />
        <TrayCell $w={40}><ChevronUp size={21} strokeWidth={1.8} /></TrayCell>
        <TrayCell $w={40}><FaDropbox size={19} color="#000" /></TrayCell>
        <TrayCell $w={40}>
          <svg width="21" height="18" viewBox="0 0 21 18"><path d="M4.500 14q-4-.5-4-4t4-4Q6 1 10.500 1T17 6q3.500.5 3.500 4t-4 4z" fill="#cfcfcf" stroke="#222" /><path d="M1 9q1-3 4-3Q6 1 10.500 1T17 6L9 12H4z" fill="#777" /><circle cx="15" cy="12.500" r="5.200" fill="#fff" /><path d="M11.500 12a3.600 3.600 0 0 1 6.500-1.500M18.500 13a3.600 3.600 0 0 1-6.500 1.500" stroke="#1273cc" strokeWidth="1.500" fill="none" /></svg>
        </TrayCell>
        <TrayCell $w={56}>POL</TrayCell>
        <TrayCell $w={35}><Plane size={21} strokeWidth={1.4} style={{ transform: 'rotate(45deg)' }} /></TrayCell>
        <TrayCell $w={28}><Volume2 size={21} strokeWidth={1.4} /></TrayCell>
        <TrayCell $w={32}>
          <svg width="21" height="17" viewBox="0 0 21 17"><rect x="1.500" y="3.500" width="16" height="11.500" rx="3" fill="none" stroke="#1b1b1b" strokeWidth="1.300" /><path d="M7 5.500h9v7.500H3.500V9z" fill="#1b1b1b" /><path d="M18.500 7.500h1.500v4h-1.500z" fill="#1b1b1b" /><path d="M5 0 1 6h2.500L2.500 10 7 4.500H4.500z" fill="#1b1b1b" stroke="#eee" strokeWidth=".5" /></svg>
        </TrayCell>
        <Clock>00:54<br />16.12.2024</Clock>
      </Taskbar>
    </Screen>
  );
}
